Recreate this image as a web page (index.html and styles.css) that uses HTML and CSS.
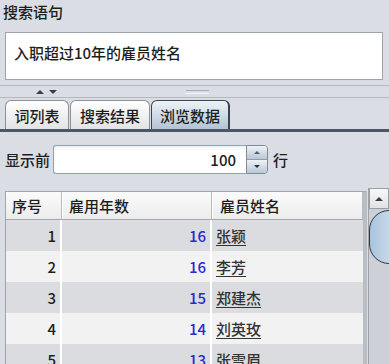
FILE: index.html
```html
<!DOCTYPE html>
<html lang="zh">
<head>
<meta charset="UTF-8">
<title>搜索语句</title>
<link rel="stylesheet" href="styles.css">
</head>
<body>
  <div class="label">搜索语句</div>
  <div class="query">入职超过10年的雇员姓名</div>

  <div class="splitter">
    <span class="arrows"><span class="tri up"></span><span class="tri down"></span></span>
    <span class="grip"></span>
  </div>

  <div class="tabs">
    <div class="tab t1">词列表</div>
    <div class="tab t2">搜索结果</div>
    <div class="tab t3 active">浏览数据</div>
  </div>

  <div class="panel">
    <div class="limit">
      <span class="limit-label">显示前</span>
      <div class="spin-input">100</div>
      <div class="spin-btns">
        <div class="spin-btn"><span class="tri small up"></span></div>
        <div class="spin-btn"><span class="tri small down"></span></div>
      </div>
      <span class="limit-unit">行</span>
    </div>

    <div class="grid-area">
      <div class="grid">
        <div class="row head">
          <div class="cell c1">序号</div>
          <div class="cell c2">雇用年数</div>
          <div class="cell c3">雇员姓名</div>
        </div>
        <div class="row odd">
          <div class="cell c1 num">1</div>
          <div class="cell c2 num blue">16</div>
          <div class="cell c3 name">张颖</div>
        </div>
        <div class="row even">
          <div class="cell c1 num">2</div>
          <div class="cell c2 num blue">16</div>
          <div class="cell c3 name">李芳</div>
        </div>
        <div class="row odd">
          <div class="cell c1 num">3</div>
          <div class="cell c2 num blue">15</div>
          <div class="cell c3 name">郑建杰</div>
        </div>
        <div class="row even">
          <div class="cell c1 num">4</div>
          <div class="cell c2 num blue">14</div>
          <div class="cell c3 name">刘英玫</div>
        </div>
        <div class="row odd">
          <div class="cell c1 num">5</div>
          <div class="cell c2 num blue">13</div>
          <div class="cell c3 name">张雪眉</div>
        </div>
      </div>
      <div class="scrollbar">
        <div class="sb-up"><span class="tri up"></span></div>
        <div class="sb-thumb"></div>
      </div>
    </div>
  </div>
</body>
</html>
```

FILE: styles.css
```css
body {
  margin: 0;
  width: 389px;
  height: 364px;
  overflow: hidden;
  background-color: #dadde3;
  font-family: "Noto Sans CJK SC", "Liberation Sans", sans-serif;
  font-size: 15px;
  font-weight: 500;
  color: #1e1e1e;
}
.label {
  padding: 2px 0 0 3px;
  line-height: 20px;
  height: 22px;
  margin-bottom: 8px;
}
.query {
  margin: 0 6px 0 5px;
  height: 48px;
  box-sizing: border-box;
  padding: 10px 0 0 8px;
  line-height: 20px;
  background-color: #fff;
  border: 1px solid #9ea3ab;
}
.splitter {
  margin-top: 5px;
  height: 11px;
  border-top: 1px solid #b4b8bf;
  border-bottom: 1px solid #b4b8bf;
  display: flex;
  align-items: center;
}
.arrows {
  display: flex;
  gap: 5px;
  margin-left: 36px;
}
.tri {
  width: 0;
  height: 0;
  border-left: 4px solid transparent;
  border-right: 4px solid transparent;
}
.tri.up {
  border-bottom: 4px solid #3a3f46;
}
.tri.down {
  border-top: 4px solid #3a3f46;
}
.tri.small {
  border-left-width: 3px;
  border-right-width: 3px;
}
.tri.small.up {
  border-bottom: 3px solid #55606c;
}
.tri.small.down {
  border-top: 3px solid #2a323a;
}
.grip {
  margin-left: 129px;
  width: 23px;
  height: 2px;
  border-top: 1px solid #a9adb4;
  border-bottom: 1px solid #f4f5f7;
}
.tabs {
  margin-top: 2px;
  display: flex;
  padding-left: 5px;
  height: 29px;
  border-bottom: 3px solid #4b5766;
}
.tab {
  box-sizing: border-box;
  height: 29px;
  padding-top: 4px;
  line-height: 22px;
  text-align: center;
  border: 1px solid #8e9298;
  border-bottom: none;
  border-radius: 6px 6px 0 0;
  background: linear-gradient(#ffffff, #e2e3e5);
  margin-right: 1px;
}
.t1 {
  width: 64px;
}
.t2 {
  width: 80px;
}
.t3 {
  width: 79px;
}
.tab.active {
  border-color: #3a4450;
  border-width: 1px 2px 0 1px;
  background: linear-gradient(#eef3f8, #b3c3d3);
}
.panel {
  padding-top: 13px;
}
.limit {
  display: flex;
  align-items: center;
  height: 29px;
  padding-left: 5px;
}
.limit-label {
  width: 48px;
}
.spin-input {
  box-sizing: border-box;
  width: 193px;
  height: 29px;
  line-height: 27px;
  padding-right: 10px;
  text-align: right;
  background: linear-gradient(#eef1f4, #ffffff 5px);
  border: 1px solid #8da2b6;
  border-right: none;
  border-radius: 3px 0 0 3px;
}
.spin-btns {
  box-sizing: border-box;
  width: 22px;
  height: 29px;
  border: 1px solid #7d8b99;
  border-radius: 0 4px 4px 0;
  display: flex;
  flex-direction: column;
  overflow: hidden;
}
.spin-btn {
  flex: 1;
  display: flex;
  align-items: center;
  justify-content: center;
  background: linear-gradient(#eef2f6, #b9c7d5);
}
.spin-btn + .spin-btn {
  border-top: 1px solid #8f9cab;
}
.limit-unit {
  margin-left: 5px;
}
.grid-area {
  margin-top: 14px;
  display: flex;
  align-items: flex-start;
}
.grid {
  margin-left: 5px;
  margin-top: 3px;
  width: 362px;
  box-sizing: border-box;
  border: 1px solid #a0a4ab;
  border-right: 4px solid #b9bdc4;
  background-color: #f2f2f2;
}
.row {
  display: flex;
  height: 31px;
  line-height: 31px;
}
.row.head {
  height: 27px;
  line-height: 27px;
  background: linear-gradient(#fbfbfb, #ececec);
  border-bottom: 1px solid #a3a6ab;
}
.row.odd {
  background-color: #dadce0;
}
.row.even {
  background-color: #f2f2f2;
}
.cell {
  box-sizing: border-box;
  white-space: nowrap;
}
.c1 {
  width: 56px;
  border-right: 2px solid #fff;
}
.c2 {
  width: 150px;
  border-right: 2px solid #fff;
}
.c3 {
  flex: 1;
}
.head .cell {
  padding-left: 6px;
  border-right: 1px solid #b8babe;
}
.head .c2 {
  border-left: 1px solid #fff;
}
.head .c3 {
  border-left: 1px solid #fff;
  padding-left: 7px;
}
.num {
  text-align: right;
  padding-right: 4px;
}
.blue {
  color: #2a2ad2;
}
.name {
  padding-left: 4px;
  color: #333;
  text-decoration: underline;
  text-underline-offset: 3px;
}
.scrollbar {
  margin-left: 1px;
  flex: 1;
  height: 180px;
  background-color: #cdd0d6;
  border-left: 1px solid #9ea2a9;
  overflow: hidden;
}
.sb-up {
  width: 20px;
  height: 21px;
  box-sizing: border-box;
  border: 1px solid #9a9ea4;
  background: linear-gradient(#f8f8f8, #e0e2e5);
  display: flex;
  align-items: center;
  justify-content: center;
}
.sb-thumb {
  margin-top: 1px;
  width: 40px;
  height: 54px;
  box-sizing: border-box;
  border: 1px solid #2e3742;
  border-radius: 27px;
  background: linear-gradient(90deg, #a9c3dc, #e3eef8);
}
```
